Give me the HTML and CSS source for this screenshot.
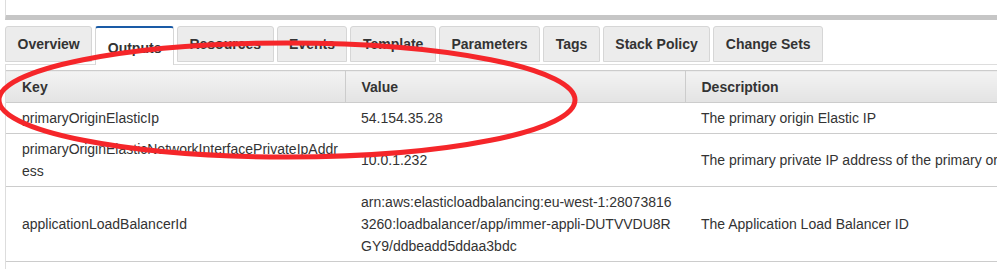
FILE: index.html
```html
<!DOCTYPE html>
<html lang="en">
<head>
    <meta charset="UTF-8">
    <title>Stack Outputs</title>
    <link rel="stylesheet" href="styles.css">
</head>
<body>
<div class="page">
    <div class="panel-top"></div>

    <div class="tabs">
        <div class="tab">Overview</div>
        <div class="tab active">Outputs</div>
        <div class="tab">Resources</div>
        <div class="tab">Events</div>
        <div class="tab">Template</div>
        <div class="tab">Parameters</div>
        <div class="tab">Tags</div>
        <div class="tab">Stack Policy</div>
        <div class="tab">Change Sets</div>
    </div>

    <div class="tab-content">
        <table class="outputs">
            <colgroup>
                <col class="col-key">
                <col class="col-value">
                <col class="col-desc">
            </colgroup>
            <thead>
                <tr>
                    <th>Key</th>
                    <th>Value</th>
                    <th>Description</th>
                </tr>
            </thead>
            <tbody>
                <tr>
                    <td>primaryOriginElasticIp</td>
                    <td>54.154.35.28</td>
                    <td>The primary origin Elastic IP</td>
                </tr>
                <tr>
                    <td>primaryOriginElasticNetworkInterfacePrivateIpAddress</td>
                    <td>10.0.1.232</td>
                    <td>The primary private IP address of the primary origin Elastic Network Interface</td>
                </tr>
                <tr>
                    <td>applicationLoadBalancerId</td>
                    <td>arn:aws:elasticloadbalancing:eu-west-1:280738163260:loadbalancer/app/immer-appli-DUTVVDU8RGY9/ddbeadd5ddaa3bdc</td>
                    <td>The Application Load Balancer ID</td>
                </tr>
            </tbody>
        </table>
    </div>

    <!-- red annotation drawn over the screenshot -->
    <svg class="annotation" width="997" height="269" viewBox="0 0 997 269">
        <ellipse cx="287" cy="100" rx="288" ry="57" fill="none" stroke="#f5262a" stroke-width="5"/>
    </svg>
</div>
</body>
</html>
```

FILE: styles.css
```css
/* Stack outputs tab */
body {
    margin: 0;
    width: 997px;
    height: 269px;
    overflow: hidden;
    background: #FFFFFF;
    font-family: "Liberation Sans", Arial, sans-serif;
    font-size: 14px;
    color: #333333;
}

.page {
    position: relative;
    width: 997px;
    height: 269px;
}

.panel-top {
    margin-left: 5px;
    height: 15px;
    border-left: 1px solid #dddddd;
    border-bottom: 5px solid #c6c6c6;
}

.tabs {
    display: flex;
    align-items: flex-end;
    gap: 3px;
    margin: 6px 0 0 5px;
    border-bottom: 1px solid #dddddd;
}

.tab {
    box-sizing: border-box;
    height: 36px;
    margin-bottom: 2px;
    padding: 0 11.5px;
    display: flex;
    align-items: center;
    background: #ececec;
    border: 1px solid #d6d6d6;
    border-radius: 3px 3px 0 0;
    font-weight: bold;
    color: #333333;
    white-space: nowrap;
}

.tab.active {
    height: 39px;
    margin-bottom: -1px;
    padding-top: 2px;
    background: #FFFFFF;
    border-color: #d6d6d6;
    border-top: 2px solid #1a5ba6;
    border-bottom: none;
}

.tab-content {
    margin-left: 5px;
    padding-top: 5px;
    border-left: 1px solid #dddddd;
    height: 300px;
}

.outputs {
    table-layout: fixed;
    width: 1300px;
    border-collapse: collapse;
}

.col-key {
    width: 339px;
}

.col-value {
    width: 340px;
}

.outputs th {
    height: 31px;
    padding: 0 6px 0 16px;
    text-align: left;
    font-weight: bold;
    color: #333333;
    background: linear-gradient(#f3f3f3, #e3e3e3);
    border-top: 1px solid #cccccc;
    border-bottom: 1px solid #cccccc;
}

.outputs th + th {
    border-left: 1px solid #cccccc;
}

.outputs td {
    padding: 4px 6px 4px 16px;
    line-height: 22px;
    vertical-align: middle;
    word-break: break-all;
    border-bottom: 1px solid #cccccc;
}

.outputs td:last-child {
    white-space: nowrap;
    word-break: normal;
}

.annotation {
    position: absolute;
    left: 0;
    top: 0;
    pointer-events: none;
}
```
